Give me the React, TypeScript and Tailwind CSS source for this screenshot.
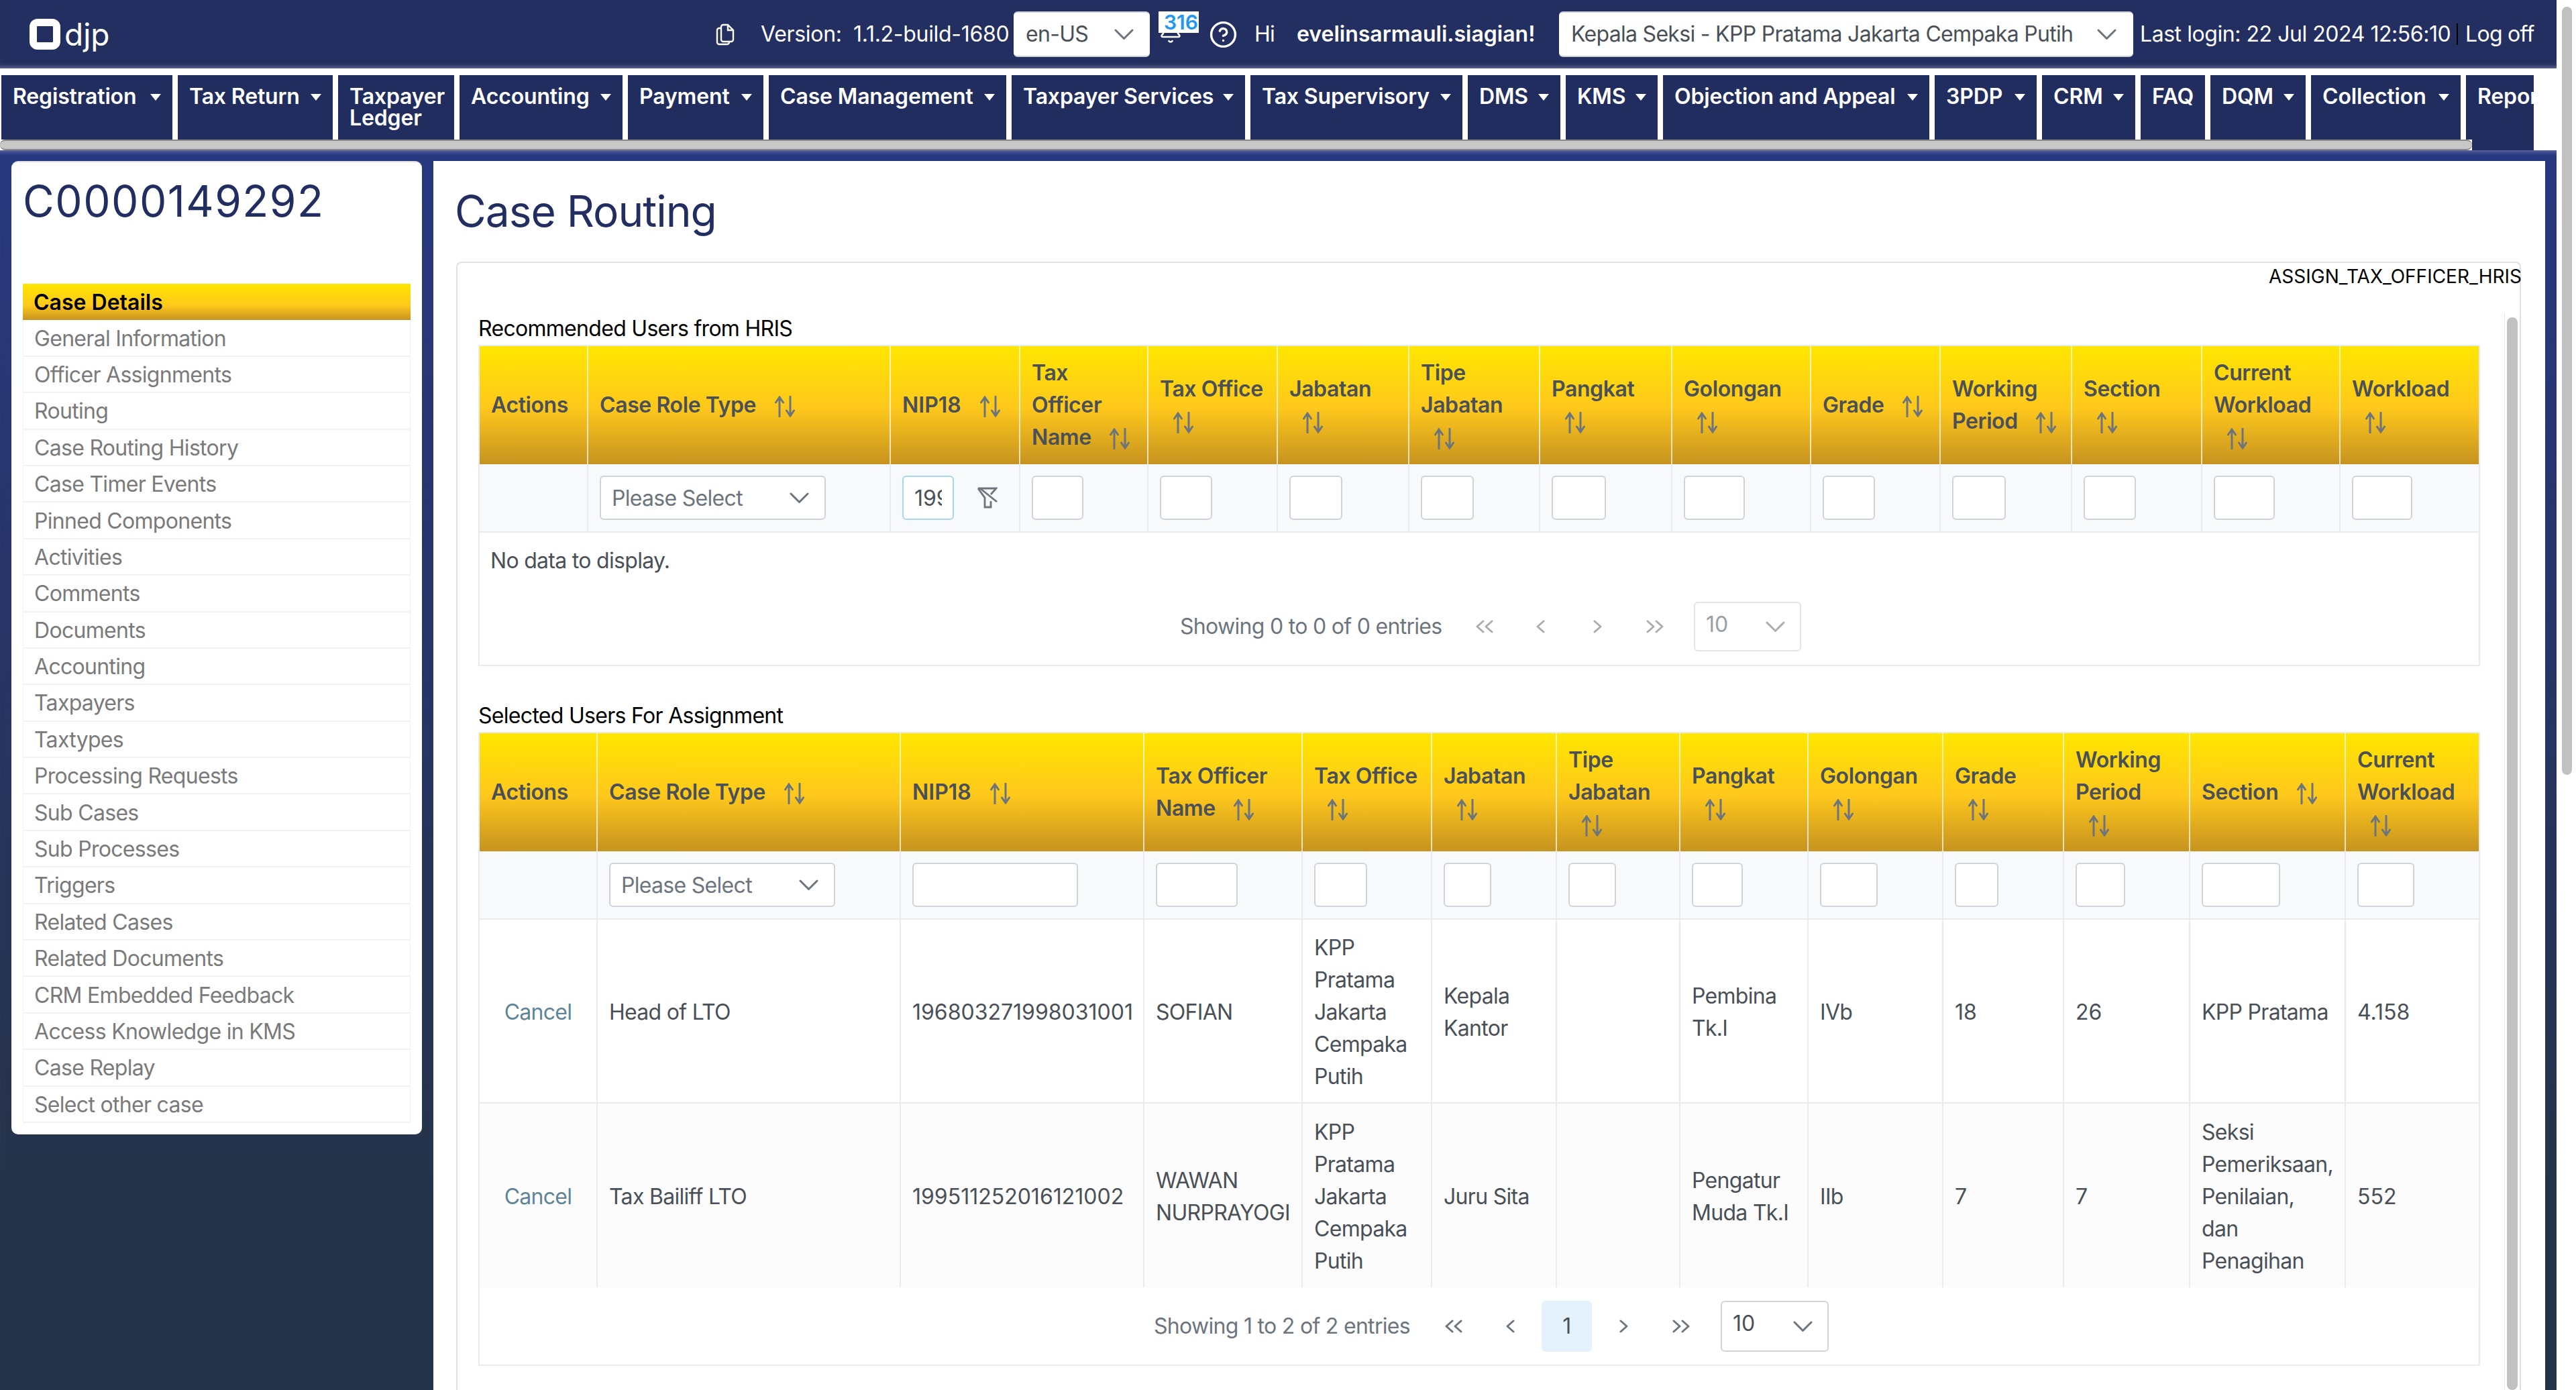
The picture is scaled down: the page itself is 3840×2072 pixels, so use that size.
import { Bell, CircleHelp } from "lucide-react";

const tabs = [
  { label: "Registration", width: "w-[255px]", caret: true },
  { label: "Tax Return", width: "w-[231px]", caret: true },
  { label: "Taxpayer Ledger", width: "w-[173px]", caret: false },
  { label: "Accounting", width: "w-[243px]", caret: true },
  { label: "Payment", width: "w-[202px]", caret: true },
  { label: "Case Management", width: "w-[354px]", caret: true },
  { label: "Taxpayer Services", width: "w-[348px]", caret: true },
  { label: "Tax Supervisory", width: "w-[316px]", caret: true },
  { label: "DMS", width: "w-[138px]", caret: true },
  { label: "KMS", width: "w-[137px]", caret: true },
  { label: "Objection and Appeal", width: "w-[397px]", caret: true },
  { label: "3PDP", width: "w-[152px]", caret: true },
  { label: "CRM", width: "w-[139px]", caret: true },
  { label: "FAQ", width: "w-[96px]", caret: false },
  { label: "DQM", width: "w-[142px]", caret: true },
  { label: "Collection", width: "w-[223px]", caret: true },
  { label: "Reports", width: "w-[200px]", caret: true },
];

const sideItems = [
  "General Information",
  "Officer Assignments",
  "Routing",
  "Case Routing History",
  "Case Timer Events",
  "Pinned Components",
  "Activities",
  "Comments",
  "Documents",
  "Accounting",
  "Taxpayers",
  "Taxtypes",
  "Processing Requests",
  "Sub Cases",
  "Sub Processes",
  "Triggers",
  "Related Cases",
  "Related Documents",
  "CRM Embedded Feedback",
  "Access Knowledge in KMS",
  "Case Replay",
  "Select other case",
];

type Column = { label: string; width: string; input?: string };

const recommendedColumns: Column[] = [
  { label: "Actions", width: "w-[162px]" },
  { label: "Case Role Type", width: "w-[451px]" },
  { label: "NIP18", width: "w-[193px]" },
  { label: "Tax Officer Name", width: "w-[191px]", input: "w-[77px]" },
  { label: "Tax Office", width: "w-[193px]", input: "w-[78px]" },
  { label: "Jabatan", width: "w-[196px]", input: "w-[79px]" },
  { label: "Tipe Jabatan", width: "w-[195px]", input: "w-[79px]" },
  { label: "Pangkat", width: "w-[197px]", input: "w-[81px]" },
  { label: "Golongan", width: "w-[207px]", input: "w-[91px]" },
  { label: "Grade", width: "w-[193px]", input: "w-[78px]" },
  { label: "Working Period", width: "w-[196px]", input: "w-[80px]" },
  { label: "Section", width: "w-[194px]", input: "w-[78px]" },
  { label: "Current Workload", width: "w-[206px]", input: "w-[91px]" },
  { label: "Workload", width: "w-[206px]", input: "w-[90px]" },
];

const selectedColumns: Column[] = [
  { label: "Actions", width: "w-[176px]" },
  { label: "Case Role Type", width: "w-[452px]" },
  { label: "NIP18", width: "w-[363px]", input: "w-[247px]" },
  { label: "Tax Officer Name", width: "w-[236px]", input: "w-[122px]" },
  { label: "Tax Office", width: "w-[193px]", input: "w-[79px]" },
  { label: "Jabatan", width: "w-[186px]", input: "w-[71px]" },
  { label: "Tipe Jabatan", width: "w-[184px]", input: "w-[71px]" },
  { label: "Pangkat", width: "w-[191px]", input: "w-[76px]" },
  { label: "Golongan", width: "w-[201px]", input: "w-[86px]" },
  { label: "Grade", width: "w-[180px]", input: "w-[65px]" },
  { label: "Working Period", width: "w-[188px]", input: "w-[74px]" },
  { label: "Section", width: "w-[232px]", input: "w-[117px]" },
  { label: "Current Workload", width: "w-[198px]", input: "w-[85px]" },
];

const selectedRows = [
  ["Head of LTO", "196803271998031001", "SOFIAN", "KPP Pratama Jakarta Cempaka Putih", "Kepala Kantor", "", "Pembina Tk.I", "IVb", "18", "26", "KPP Pratama", "4.158"],
  ["Tax Bailiff LTO", "199511252016121002", "WAWAN NURPRAYOGI", "KPP Pratama Jakarta Cempaka Putih", "Juru Sita", "", "Pengatur Muda Tk.I", "IIb", "7", "7", "Seksi Pemeriksaan, Penilaian, dan Penagihan", "552"],
];

function SortIcon() {
  return (
    <svg
      className="ml-[20px] inline-block h-[32px] w-[30px] align-middle text-[#6c757d]"
      viewBox="0 0 30 32"
      fill="none"
      stroke="currentColor"
      strokeWidth="3"
      strokeLinecap="round"
    >
      <path d="M7 31V2M1.5 10L7 2l5.500 8" />
      <path d="M23 1v29M17.500 22l5.500 8 5.500-8" />
    </svg>
  );
}

function FilterSlashIcon() {
  return (
    <svg className="ml-[34px] h-[32px] w-[31px] shrink-0 text-[#6c757d]" viewBox="0 0 31 32" fill="none" stroke="currentColor" strokeWidth="2.8">
      <path d="M2 2h27l-8 9" />
      <path d="M2 2l10 14v14h9V21" />
      <path d="M5 2l25 20" />
    </svg>
  );
}

function CopyFilesIcon() {
  return (
    <svg className="h-[34px] w-[28px] text-white" viewBox="0 0 28 34" fill="none" stroke="currentColor" strokeWidth="2.4">
      <path d="M8 25V6a3 3 0 0 1 3-3h7l8 8v14a3 3 0 0 1-3 3H11a3 3 0 0 1-3-3z" />
      <path d="M18 3v8h8" />
      <path d="M8 8H5a3 3 0 0 0-3 3v18a3 3 0 0 0 3 3h12a3 3 0 0 0 3-3v-1" />
    </svg>
  );
}

function Chevron({ className }: { className: string }) {
  return (
    <svg className={`h-[16px] w-[29px] shrink-0 ${className}`} viewBox="0 0 29 16" fill="none" stroke="currentColor" strokeWidth="3" strokeLinecap="round" strokeLinejoin="round">
      <path d="M2 2l12.500 12.500L27 2" />
    </svg>
  );
}

function PagerIcon({ path, className }: { path: string; className: string }) {
  return (
    <svg className={`h-[20px] w-[26px] shrink-0 ${className}`} viewBox="0 0 26 20" fill="none" stroke="currentColor" strokeWidth="3" strokeLinecap="round" strokeLinejoin="round">
      <path d={path} />
    </svg>
  );
}

const doubleLeft = "M11 2L2 10l9 8M24 2l-9 8 9 8";
const singleLeft = "M17 2l-9 8 9 8";
const singleRight = "M9 2l9 8-9 8";
const doubleRight = "M2 2l9 8-9 8M15 2l9 8-9 8";

function SelectBox({ text, className }: { text: string; className: string }) {
  return (
    <div className={`flex h-[66px] items-center justify-between rounded-[6px] border-2 border-[#ced4da] bg-white pl-[16px] pr-[23px] text-[#6c757d] ${className}`}>
      <span className="whitespace-nowrap pt-[2px]">{text}</span>
      <Chevron className="text-[#6c757d]" />
    </div>
  );
}

function RecommendedPager() {
  const tone = "text-[#a9adb1]";
  return (
    <div className="ml-[1044px] flex items-center text-[#6c757d]">
      <span className="w-[391px] whitespace-nowrap">Showing 0 to 0 of 0 entries</span>
      <PagerIcon path={doubleLeft} className={`ml-[50px] ${tone}`} />
      <PagerIcon path={singleLeft} className={`ml-[58px] ${tone}`} />
      <PagerIcon path={singleRight} className={`ml-[58px] ${tone}`} />
      <PagerIcon path={doubleRight} className={`ml-[60px] ${tone}`} />
      <div className="ml-[45px] flex h-[74px] w-[160px] justify-between rounded-[6px] border-2 border-[#e3e6e9] pl-[16px] pr-[22px] tracking-normal text-[#999fa5]">
        <span className="mt-[8px]">10</span>
        <Chevron className={`mt-[27px] ${tone}`} />
      </div>
    </div>
  );
}

function SelectedPager() {
  const tone = "text-[#6c757d]";
  return (
    <div className="ml-[1005px] flex items-center text-[#6c757d]">
      <span className="w-[384px] whitespace-nowrap">Showing 1 to 2 of 2 entries</span>
      <PagerIcon path={doubleLeft} className={`ml-[50px] ${tone}`} />
      <PagerIcon path={singleLeft} className={`ml-[59px] ${tone}`} />
      <div className="ml-[33px] flex h-[76px] w-[75px] items-center justify-center rounded-[6px] bg-[#e3f2fd] text-[#495057]">1</div>
      <PagerIcon path={singleRight} className={`ml-[34px] ${tone}`} />
      <PagerIcon path={doubleRight} className={`ml-[60px] ${tone}`} />
      <div className="ml-[46px] flex h-[76px] w-[161px] justify-between rounded-[6px] border-2 border-[#ced4da] pl-[16px] pr-[22px] tracking-normal text-[#495057]">
        <span className="mt-[8px]">10</span>
        <Chevron className={`mt-[28px] ${tone}`} />
      </div>
    </div>
  );
}

function TableHead({ columns, nipValue }: { columns: Column[]; nipValue?: string }) {
  return (
    <>
      <colgroup>
        {columns.map((col) => (
          <col key={col.label} className={col.width} />
        ))}
      </colgroup>
      <thead>
        <tr className="h-[176px] bg-[linear-gradient(180deg,#ffe600_0%,#ffc81c_52%,#c69320_100%)]">
          {columns.map((col) => (
            <th
              key={col.label}
              className={`border-r-2 border-white/70 px-[17px] text-left font-semibold text-[#495057] last:border-r-0 ${col.label === "NIP18" ? "tracking-normal" : "tracking-[-0.4px]"}`}
            >
              {col.label}{" "}
              {col.label !== "Actions" && <SortIcon />}
            </th>
          ))}
        </tr>
        <tr className="h-[102px] bg-[#f8f9fa]">
          {columns.map((col) => (
            <th key={col.label} className="border-b-2 border-r-2 border-[#e9ecef] px-[17px] text-left font-normal last:border-r-0">
              {col.label === "Case Role Type" && <SelectBox text="Please Select" className="w-[337px]" />}
              {col.label === "NIP18" && nipValue && (
                <div className="flex items-center">
                  <input
                    readOnly
                    value={nipValue}
                    className="h-[66px] w-[77px] rounded-[6px] border-2 border-[#a6d5fa] bg-white px-[16px] tracking-normal text-[#495057] outline-none"
                  />
                  <FilterSlashIcon />
                </div>
              )}
              {col.input && <input readOnly className={`block h-[66px] rounded-[6px] border-2 border-[#ced4da] bg-white ${col.input}`} />}
            </th>
          ))}
        </tr>
      </thead>
    </>
  );
}

export default function App() {
  return (
    <div className="flex h-[2072px] w-[3840px] overflow-hidden bg-white font-['Inter',sans-serif] text-[32px] leading-[48px] tracking-[-0.7px]">
      <div className="flex w-[3811px] shrink-0 flex-col">
        <header className="flex h-[102px] shrink-0 items-center whitespace-nowrap bg-[#232f60] text-white shadow-[inset_0_-7px_6px_-5px_rgba(255,255,255,0.35)]">
          <div className="ml-[44px] h-[46px] w-[46px] rounded-[12px] border-[11px] border-white" />
          <span className="ml-[6px] w-[62px] text-[46px] leading-[46px] tracking-normal">djp</span>
          <div className="ml-[909px]">
            <CopyFilesIcon />
          </div>
          <span className="ml-[39px] w-[368px] tracking-[-0.3px]">Version:&nbsp; 1.1.2-build-1680</span>
          <div className="ml-[9px] flex h-[68px] w-[203px] items-center justify-between rounded-[6px] border-y-2 border-[#ced4da] bg-white pl-[18px] pr-[24px] text-[#495057]">
            en-US
            <Chevron className="text-[#6c757d]" />
          </div>
          <div className="relative ml-[13px] flex h-[102px] w-[60px] items-center justify-center pb-[7px]">
            <Bell size={49} strokeWidth={1.7} className="mr-[24px]" />
            <span className="absolute left-0 top-[17px] h-[32px] w-[60px] overflow-hidden bg-white pl-[8px] text-left text-[30px] font-semibold leading-[32px] tracking-normal text-[#2196f3]">316</span>
          </div>
          <CircleHelp size={43} strokeWidth={1.9} className="ml-[15px]" />
          <span className="ml-[25px] w-[63px]">Hi</span>
          <span className="w-[391px] font-semibold tracking-normal">evelinsarmauli.siagian!</span>
          <div className="flex h-[68px] w-[856px] items-center justify-between rounded-[6px] border-y-2 border-[#ced4da] bg-white pl-[18px] pr-[25px] text-[#495057]">
            Kepala Seksi - KPP Pratama Jakarta Cempaka Putih
            <Chevron className="text-[#6c757d]" />
          </div>
          <span className="ml-[10px] w-[461px] tracking-[-0.45px]">Last login: 22 Jul 2024 12:56:10</span>
          <span className="ml-[11px] h-[32px] w-[2px] bg-black" />
          <span className="ml-[11px]">Log off</span>
        </header>

        <div className="h-[10px] shrink-0 bg-white" />

        <nav className="flex h-[96px] w-[3777px] shrink-0 gap-[8px] overflow-hidden bg-white pl-[2px]">
          {tabs.map((tab) => (
            <div key={tab.label} className={`flex shrink-0 items-start justify-between bg-[#222d5f] px-[17px] pt-[16px] font-semibold leading-[32px] tracking-[-0.15px] text-white ${tab.width}`}>
              <span className={tab.label === "Taxpayer Ledger" ? "" : "whitespace-nowrap"}>{tab.label}</span>
              {tab.caret && <span className="mt-[12px] h-0 w-0 shrink-0 border-x-[8px] border-t-[10px] border-x-transparent border-t-white" />}
            </div>
          ))}
        </nav>

        <div className="flex h-[16px] w-[3777px] shrink-0">
          <div className="w-[3685px] rounded-full border-y-2 border-[#888] bg-[#c8c8c8]" />
          <div className="flex-1 bg-[#222d5f]" />
        </div>

        <div className="flex min-h-0 flex-1 bg-[linear-gradient(180deg,#283880_0%,#27356a_35%,#253349_85%)] pl-[17px] pr-[16px] pt-[16px] shadow-[inset_0_7px_6px_-5px_rgba(255,255,255,0.3)]">
          <aside className="w-[612px] shrink-0">
            <div className="rounded-[10px] border-t-2 border-[#e0e0e0] bg-white px-[17px] pb-[17px]">
              <h2 className="h-[181px] pt-[20px] text-[64px] font-normal leading-[76px] tracking-[1.5px] text-[#222e61]">C0000149292</h2>
              <ul>
                <li className="flex h-[54.4px] items-center bg-[linear-gradient(180deg,#ffe600_0%,#ffc81c_60%,#c69320_100%)] pl-[16px] pt-[2px] font-semibold tracking-normal text-black">Case Details</li>
                {sideItems.map((item) => (
                  <li key={item} className="flex h-[54.4px] items-center border-x border-b-2 border-[#f2f2f2] pl-[16px] pt-[2px] text-[#7a7a7a]">
                    {item}
                  </li>
                ))}
              </ul>
            </div>
          </aside>

          <main className="ml-[17px] flex w-[3148px] shrink-0 flex-col bg-white pl-[34px]">
            <h1 className="-ml-[2px] h-[150px] pt-[30px] text-[64px] font-normal leading-[90px] tracking-[-1px] text-[#222e61]">Case Routing</h1>

            <div className="flex w-[3078px] flex-1 flex-col rounded-t-[8px] border-x-2 border-t-2 border-[#e0e0e0]">
              <div className="flex h-[41px] shrink-0 justify-end">
                <span className="-mr-[3px] text-[28px] leading-[41px] tracking-normal text-black">ASSIGN_TAX_OFFICER_HRIS</span>
              </div>

              <div className="flex min-h-0 flex-1 pl-[31px] pt-[33px]">
                <div className="w-[2984px] shrink-0">
                  <div className="text-black">Recommended Users from HRIS</div>
                  <div className="border-2 border-[#e9ecef] text-[#495057]">
                    <table className="w-[2980px] table-fixed border-separate border-spacing-0">
                      <TableHead columns={recommendedColumns} nipValue="199511252016121002" />
                    </table>
                    <div className="flex h-[83px] items-center pl-[16px]">No data to display.</div>
                    <div className="flex h-[114px] items-start pt-[20px]">
                      <RecommendedPager />
                    </div>
                  </div>

                  <div className="mt-[50px] text-black">Selected Users For Assignment</div>
                  <div className="border-2 border-[#e9ecef] text-[#495057]">
                    <table className="w-[2980px] table-fixed border-separate border-spacing-0">
                      <TableHead columns={selectedColumns} />
                      <tbody>
                        {selectedRows.map((row, index) => (
                          <tr key={row[1]} className={index === 0 ? "h-[274px] bg-white" : "h-[274px] bg-[#fcfcfc]"}>
                            <td className={`border-r-2 border-[#e9ecef] pt-[3px] text-center text-[#5e8596] ${index === 0 ? "border-b-2" : ""}`}>Cancel</td>
                            {row.map((cell, cellIndex) => (
                              <td key={cellIndex} className={`border-r-2 border-[#e9ecef] px-[17px] pt-[3px] last:border-r-0 ${/^\d/.test(cell) ? "tracking-normal" : ""} ${index === 0 ? "border-b-2" : ""}`}>
                                {cell}
                              </td>
                            ))}
                          </tr>
                        ))}
                      </tbody>
                    </table>
                    <div className="flex h-[115px] items-start pt-[20px]">
                      <SelectedPager />
                    </div>
                  </div>
                </div>

                <div className="ml-[36px] flex w-[23px] shrink-0 justify-center border-l border-[#e8e8e8] pt-[7px]">
                  <div className="h-full w-[16px] rounded-full bg-[#c1c1c1]" />
                </div>
              </div>
            </div>
          </main>
        </div>
      </div>

      <div className="flex-1 pl-[8px] pt-[10px]">
        <div className="h-[1145px] w-[15px] rounded-full bg-[#c1c1c1]" />
      </div>
    </div>
  );
}
